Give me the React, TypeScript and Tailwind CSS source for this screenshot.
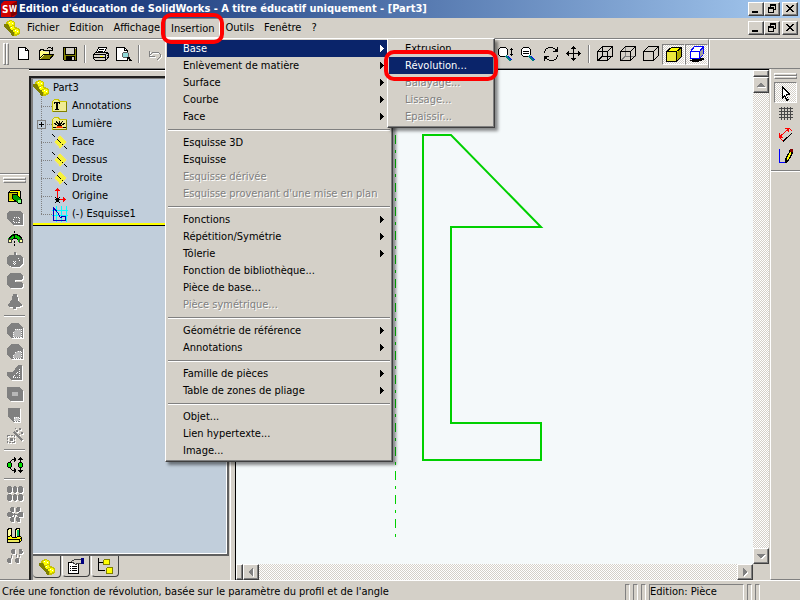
import type { ReactNode } from 'react'
import { clsx } from 'clsx'

function Icon({ children, off }: { children: ReactNode; off?: boolean }) {
  return (
    <svg
      width="16"
      height="16"
      viewBox="0 0 16 16"
      fill="none"
      shapeRendering="crispEdges"
      aria-hidden="true"
      className={clsx('block shrink-0', off && 'drop-shadow-[1px_1px_0_#fff]')}
    >
      {children}
    </svg>
  )
}

/* ---------- icons ---------- */

const PartIcon = () => (
  <Icon>
    <path d="M3 1h2V0h3v1h2v1h1v5h2v1h2v1h1v5h-1v1h-2v1H9v-1L0 7V4h2V2h1z" fill="#c8c400" />
    <path d="M0 4h4l1 2 2 3 3 3v4H8L7 14 0 7z" fill="#808000" />
    <path d="M4 2h2V1h2v1h2v3H8v1H5V4H4zM6 7h2V6h2v2h1v1H9v1H7V9H6zM9 10h2V9h3v1h1v3h-2v1h-2v-2H9z" fill="#ffff00" />
    <path d="M5 2h1v1H5zM8 3h1v1H8zM7 7h1v1H7zM11 10h1v1h-1zM13 11h1v1h-1z" fill="#fff" />
  </Icon>
)

const NewIcon = () => (
  <Icon>
    <path d="M2.5 1.5h7l3 3v9h-10z" fill="#fff" stroke="#000" />
    <path d="M9.5 1.5v3h3" stroke="#000" />
  </Icon>
)

const OpenIcon = () => (
  <Icon>
    <path d="M1 5h4l1 1h5v3H5l-4 4z" fill="#ffff80" />
    <path d="M1 13l4-4h10l-4 4z" fill="#808000" />
    <path d="M.5 13.500v-9h1v-1h3v1h6v4M.5 13.500h10l4-5h-10l-4 4" stroke="#000" />
    <path d="M8 2.500h1M9 1.500h3M12 2.500h1M13.500 1v4M11 4.500h3" stroke="#000" />
  </Icon>
)

const SaveIcon = () => (
  <Icon>
    <path d="M1.500 1.500h13v13h-12l-1-1z" fill="#808000" stroke="#000" />
    <path d="M4 2h8v6H4z" fill="#d4d0c8" />
    <path d="M3.500 2v6.500h9V2" stroke="#000" />
    <path d="M4 10h9v4H4z" fill="#000" />
    <path d="M10 11h2v3h-2zM13 2h1v1h-1z" fill="#d4d0c8" />
  </Icon>
)

const PrintIcon = () => (
  <Icon>
    <path d="M3.500 6.500l2-5h8l-2 5" fill="#fff" stroke="#000" />
    <path d="M6 3.500h5M5 5.500h5" stroke="#000" />
    <path d="M.5 8.500l2-2h12l1 1v4l-3 3h-10l-2-2z" fill="#d4d0c8" stroke="#000" />
    <path d="M1 8.500h11.500v5M12.500 8.500l3-2M1 11.500h11" stroke="#000" />
    <path d="M7 10h3v1H7z" fill="#ffff00" />
    <path d="M14 9h1v1h-1zM14 11h1v1h-1z" fill="#000" />
  </Icon>
)

const PreviewIcon = () => (
  <Icon>
    <path d="M.5 1.500h8l3 3v10H.5z" fill="#fff" stroke="#000" />
    <path d="M8.500 1.500v3h3" stroke="#000" />
    <circle cx="9.500" cy="9" r="3" fill="#90d8d8" stroke="#606060" />
    <path d="M12 11l3 4" stroke="#000" strokeWidth="2" />
  </Icon>
)

const UndoIcon = () => (
  <Icon off>
    <path d="M2.500 5v5h5M3 9l3-3h5l2 2v3l-2 2h-1" stroke="#808080" />
  </Icon>
)

const ZoomSheetIcon = () => (
  <Icon>
    <circle cx="6" cy="6" r="5" fill="#fff" stroke="#000" />
    <path d="M9 10l5 5" stroke="#008080" strokeWidth="2" />
    <path d="M11 10l4 4" stroke="#0000ff" />
    <path d="M14.500 2v8M13 3.500h3M13 8.500h3" stroke="#000" />
  </Icon>
)

const ZoomOutIcon = () => (
  <Icon>
    <circle cx="6" cy="6" r="5" fill="#fff" stroke="#000" />
    <path d="M3 5.500h6M3 7.500h6" stroke="#000" />
    <path d="M9 10l5 5" stroke="#008080" strokeWidth="2" />
    <path d="M11 10l4 4" stroke="#0000ff" />
  </Icon>
)

const RotateIcon = () => (
  <Icon>
    <path
      d="M1 5h1v2H1zM2 3h1v2H2zM3 2h2v1H3zM5 1h5v1H5zM10 2h2v1h-2zM12 3h1v1h-1zM14 1h1v5h-5V5h2V4h1V3h1z"
      fill="#000"
    />
    <path
      d="M14 9h1v2h-1zM13 11h1v2h-1zM11 13h2v1h-2zM6 14h5v1H6zM4 13h2v1H4zM3 12h1v1H3zM1 15V10h5v1H4v1H3v1H2v2z"
      fill="#000"
    />
  </Icon>
)

const PanIcon = () => (
  <Icon>
    <path d="M7.500 1v13M1 7.500h13" stroke="#000" />
    <path
      d="M7 0h1v1h1v1h1v1H5V2h1V1h1zM7 15h1v-1h1v-1h1v-1H5v1h1v1h1zM0 7v1h1v1h1v1h1V5H2v1H1v1zM15 7v1h-1v1h-1v1h-1V5h1v1h1v1z"
      fill="#000"
    />
  </Icon>
)

const CubeIcon = ({ hidden }: { hidden?: string }) => (
  <Icon>
    {hidden && <path d="M5.500 1v9h10M1 14.500l4.500-4.500" stroke={hidden} />}
    <path d="M.5 5.500h10v9H.5zM.5 5.500l5-5h10l-5 5M15.500.5v9l-5 5" stroke="#000" />
  </Icon>
)

const ShadedIcon = () => (
  <Icon>
    <path d="M.5 5.500l5-4h10v9l-5 5H.5z" fill="#ffff00" stroke="#000" />
    <path d="M11 6l4-4v8l-4 4z" fill="#b0ac00" />
    <path d="M1 6h9v9H1z" fill="#ece83c" />
    <path d="M.5 5.500h10v9M10.500 5.500l5-4" stroke="#000" />
  </Icon>
)

const ShadowIcon = () => (
  <Icon>
    <path d="M3 12h12v2h-2v1h-3v1H3v-1H1v-1h2z" fill="#000" />
    <path d="M1.500 5.500l4-5h9v7l-4 5h-9z" fill="#fff" stroke="#0000ff" />
    <path d="M11 6l3-4v6l-3 3z" fill="#a0a0a0" />
    <path d="M1.500 5.500h9v7M10.500 5.500l4-5" stroke="#0000ff" />
  </Icon>
)

const SelectIcon = () => (
  <Icon>
    <path
      d="M4 1h1v1h1v1h1v1h1v1h1v1h1v1h1v1h1v2H9v2h1v2h1v1h-1v1H8v-2H7v-2H6v1H5v1H4z"
      fill="#000"
    />
    <path d="M5 4h1v1h1v1h1v1h1v1h1v1H8v2h1v2h1v1H9v-1H8v-2H7v-1H6v1H5z" fill="#fff" />
  </Icon>
)

const GridIcon = () => (
  <Icon>
    <path
      d="M1 2.500h14M1 5.500h14M1 8.500h14M1 11.500h14M3.500 1v13M6.500 1v13M9.500 1v13M12.500 1v13"
      stroke="#484848"
    />
  </Icon>
)

const DimensionIcon = () => (
  <Icon>
    <path d="M2 9.500L10.500 2" stroke="#ff0000" />
    <path d="M1 6h1v2h2v2h1v1H1zM7 2V1h4v4h-1V3H9V2z" fill="#ff0000" />
    <path d="M1 10l4 4M11 1l3 3" stroke="#ff0000" />
    <path d="M5 14.500l9.500-9" stroke="#000" />
  </Icon>
)

const SketchIcon = () => (
  <Icon>
    <path d="M1.500 1v13.500h5" stroke="#0000ff" strokeWidth="1" />
    <path d="M7 15v-4l1-2 3-5 1-3h3v4l-2 4-3 5-2 1z" fill="#000" />
    <path d="M9 10l3-6h1v2l-3 6H9z" fill="#ffff00" />
    <path d="M12 1h3v3h-3z" fill="#800000" />
  </Icon>
)

const BossIcon = () => (
  <Icon>
    <path d="M1.500 3.500l2-2h9l1 1v8l-2 2h-10z" fill="#ffff00" stroke="#000" />
    <path d="M2 4h8v7H2z" fill="#c8c400" />
    <path d="M1.500 3.500h9v8" stroke="#000" />
    <path d="M5.500 5.500h4l5 5v4h-3l-6-5z" fill="#00a000" stroke="#000" />
    <path d="M11 11h3v3h-3z" fill="#80ff80" />
  </Icon>
)

const CutIcon = () => (
  <Icon off>
    <path d="M0 3l2-2h11l3 3v11H6l-6-6z" fill="#808080" />
    <path d="M6.500 7.500h6v5h-6z" stroke="#fff" strokeDasharray="1 1" />
  </Icon>
)

const RevolveIcon = () => (
  <Icon>
    <path d="M1 8l2-3 3-2h4l3 2 2 3v3h-4V9L9 8H7L5 9 4 11H1z" fill="#00c800" />
    <path d="M1 8h1V6h1V5h1V4h2V3h4v1h2v1h1v1h1v2M5 9l2-2h2l2 2" stroke="#000" />
    <path d="M1 8h3v3H1zM12 8h3v3h-3z" fill="#ffffa0" stroke="#404040" />
    <path d="M7.500 0v2M7.500 4v4M7.500 10v2M7.500 13v2" stroke="#000" />
  </Icon>
)

const RevolveCutIcon = () => (
  <Icon off>
    <path d="M0 5l3-2h4V0h2v3h4l3 3v5l-3 4H5l-5-3z" fill="#808080" />
    <path d="M6 9h1v1H6zM8 9h1v1H8zM7 10h1v1H7zM6 11h1v1H6zM8 11h1v1H8zM7 12h1v1H7zM11 6h1v1h-1zM12 8h1v1h-1z" fill="#fff" />
  </Icon>
)

const SweepIcon = () => (
  <Icon off>
    <path d="M3 0h10l3 2v3l-2 2H8v2h6l2 1v3l-2 2H3l-3-3V3z" fill="#808080" />
  </Icon>
)

const LoftIcon = () => (
  <Icon off>
    <path d="M6 0h4l1 5 1 3 4 3-4 2H9v2H6v-2H3l-3-2 3-3 2-3z" fill="#808080" />
  </Icon>
)

const FilletIcon = ({ cut }: { cut?: boolean }) => (
  <Icon off>
    <path d="M5 0h6l5 5v10H5l-5-4V4z" fill="#808080" />
    <path d={cut ? 'M6 14v-3l4-4h4v7z' : 'M6 14v-5l3-3h5v8z'} fill="#b8b8b8" stroke="#fff" strokeDasharray="1 1" />
  </Icon>
)

const RibIcon = () => (
  <Icon off>
    <path d="M11 0h4v15H4l-4-4V7h6z" fill="#808080" />
    <path d="M6 12.500h6.500V4M6 12l6-6" stroke="#fff" strokeDasharray="1 1" />
  </Icon>
)

const ShellIcon = () => (
  <Icon off>
    <path d="M0 1h12l4 3v11H3l-3-3z" fill="#808080" />
    <path d="M5 6h6v4H5z" fill="#b8b8b8" />
  </Icon>
)

const DraftIcon = () => (
  <Icon off>
    <path d="M1 1h12v14H6l-5-5z" fill="#808080" />
    <path d="M7 10h5v4H7z" fill="#c8c8c8" stroke="#fff" strokeDasharray="1 1" />
  </Icon>
)

const WizardIcon = () => (
  <Icon off>
    <path d="M.5 7.500h7v7h-7z" stroke="#808080" strokeDasharray="2 1" />
    <path d="M3 10h3v3H3zM6 4l2-1 8 9-2 1z" fill="#808080" />
    <path d="M9 2h2v2H9zM12 0h2v2h-2zM14 4h2v2h-2zM12 6h1v1h-1zM8 0h1v1H8z" fill="#808080" />
  </Icon>
)

const MateIcon = () => (
  <Icon>
    <path
      d="M3 4h1v2H3zM4 3h1v1H4zM5 2h2V0h1v1h1v3H8v1H7V3H5zM3 10h1v2H3zM4 12h1v1H4zM5 13h2v-2h1v1h1v3H8v1H7v-2H5zM13 0h1v1h1v1h1v1h-2v3h-1V3h-2V2h1V1h1zM13 16h1v-1h1v-1h1v-1h-2v-3h-1v3h-2v1h1v1h1z"
      fill="#000"
    />
    <path d="M1 5h3v1h1v4H4v1H1v-1H0V6h1zM12 5h3v1h1v4h-1v1h-3v-1h-1V6h1z" fill="#000" />
    <path d="M1 6h3v4H1zM12 6h3v4h-3z" fill="#00e000" />
  </Icon>
)

const PatternIcon = () => (
  <Icon off>
    <path
      d="M1 0h3v1h1v5H4v1H1V6H0V1h1zM7 0h2v1h1v5H9v1H7V6H6V1h1zM12 0h3v1h1v5h-1v1h-3V6h-1V1h1zM1 8h3v1h1v5H4v1H1v-1H0V9h1zM7 8h2v1h1v5H9v1H7v-1H6V9h1zM12 8h3v1h1v5h-1v1h-3v-1h-1V9h1z"
      fill="#808080"
    />
  </Icon>
)

const CircularIcon = () => (
  <Icon off>
    <path
      d="M4 0h2l1 1v4H5L3 4V1zM10 0h2l1 1v3l-2 1H9V1zM1 5h3l2 2v2l-2 1H1L0 9V6zM12 5h3l1 1v3l-1 1h-3l-2-1V7zM5 10h2v4l-1 1H4l-1-1v-3zM9 10h2l2 1v3l-1 1h-2l-1-1z"
      fill="#808080"
    />
    <path d="M7.500 6v4M6 7.500h4" stroke="#808080" />
  </Icon>
)

const MirrorIcon = () => (
  <Icon>
    <path d="M.5 9.500v-8h1v-1h3v8M8.500 8.500v-7h1v-1h3v9" fill="#ffffa0" stroke="#000" />
    <path d="M10 2h2v7h-2z" fill="#00c060" />
    <path d="M.5 9.500l3-2 2 2h4l1-1h3l1 1v3l-2 2H.5z" fill="#ffff00" stroke="#000" />
    <path d="M1 11.500h11.500v3M12.500 11.500l2-2" stroke="#000" />
    <path d="M1 12h11v2H1z" fill="#ece85c" />
  </Icon>
)

const LinksIcon = () => (
  <Icon off>
    <path d="M5 0h3v5H5l-1-2zM12 0h3l1 3-1 2h-3zM9 5h1v3H9zM1 9h3v5H1l-1-2zM9 9h3v5H9l-1-2zM4 6h1v3H4zM12 6h1v2h-1z" fill="#808080" />
  </Icon>
)

const FolderIcon = ({ children }: { children?: ReactNode }) => (
  <Icon>
    <path d="M.5 3.500l2-2h4l1 2h7v10H.5z" fill="#f0ec94" stroke="#c8c400" />
    <path d="M14.500 4v9.500H1" stroke="#808000" />
    {children}
  </Icon>
)

const AnnotationIcon = () => (
  <FolderIcon>
    <path d="M2 4h6v2H7V5H6v6h1v1H3v-1h1V5H3v1H2z" fill="#000" />
  </FolderIcon>
)

const LightIcon = () => (
  <FolderIcon>
    <path d="M4 12v-1h1v-1h5v1h1v1z" fill="#ff4000" />
    <path d="M7.500 5v4M4 5l3 4M11 5L8 9M2 7l3 2M13 7l-3 2M1 11.500h3M11 11.500h3M5 9.500h5" stroke="#000" />
  </FolderIcon>
)

const PlaneIcon = () => (
  <Icon>
    <path d="M8 1l7 7-7 7-6-7z" fill="#f6f23c" stroke="#d4d0c8" />
    <path d="M0 0l3 3M5 5l4 4M10 10l1 1M12 12l3 3" stroke="#000" />
  </Icon>
)

const OriginIcon = () => (
  <Icon>
    <path d="M5.500 2v8M7 11.500h6" stroke="#ff0000" />
    <path d="M5 0h1v1h1v1h1v1H3V2h1V1h1zM14 11v1h-1v1h-1v1h-1V9h1v1h1v1z" fill="#ff0000" />
    <path d="M4 10h3v4H4zM3 9h1v1H3zM7 9h1v1H7zM3 14h1v1H3zM7 14h1v1H7zM3 11h5v1H3z" fill="#000" />
  </Icon>
)

const SketchNodeIcon = () => (
  <Icon>
    <path d="M0 4.500h16M0 9.500h16M4.500 0v16M9.500 0v16M14.500 0v16" stroke="#00ffff" />
    <path d="M1.500 1.500v13h12v-4h-3l-2 1-3-5z" stroke="#0000c0" />
  </Icon>
)

const PropertiesIcon = () => (
  <Icon>
    <path d="M.5 4.500h10v11H.5z" fill="#fff" stroke="#000" />
    <path d="M2 8.500h1M4 8.500h5M2 10.500h1M4 10.500h5M2 12.500h1M4 12.500h5" stroke="#000" />
    <path d="M3.500 3.500l3-2h7v4h-4l-2 1z" fill="#d4d0c8" stroke="#404040" />
    <path d="M13 0h3v6h-3z" fill="#000080" />
  </Icon>
)

const ConfigIcon = () => (
  <Icon>
    <path d="M1.500 0v12.500h6M2 4.500h4" stroke="#000" />
    <path d="M6.500 2.500l1-1h5v5h-6zM9.500 10.500l1-1h5v6h-6z" fill="#ffff00" stroke="#808000" />
  </Icon>
)

/* ---------- window parts ---------- */

const raised =
  'bg-[#d4d0c8] border border-t-white border-l-white border-r-[#404040] border-b-[#404040] shadow-[inset_-1px_-1px_0_#808080]'
const dither =
  'bg-[repeating-conic-gradient(#ffffff_0_25%,#d4d0c8_0_50%)] bg-[length:2px_2px]'

function WindowButtons() {
  const btn = clsx('flex h-[14px] w-4 items-center justify-center', raised)
  return (
    <div className="ml-auto flex pr-0.5">
      <button className={btn} aria-label="Réduire">
        <svg width="10" height="10" shapeRendering="crispEdges">
          <path d="M1 7h6v2H1z" />
        </svg>
      </button>
      <button className={btn} aria-label="Restaurer">
        <svg width="10" height="10" shapeRendering="crispEdges">
          <path d="M3 0h6v6H7V5h1V2H4v1H3zM1 3h6v6H1zM2 5v3h4V5z" fillRule="evenodd" />
        </svg>
      </button>
      <button className={clsx(btn, 'ml-0.5')} aria-label="Fermer">
        <svg width="10" height="10" shapeRendering="crispEdges" fill="none" stroke="#000">
          <path d="M1 1l7 7M2 1l7 7M8 1L1 8M9 1L2 8" />
        </svg>
      </button>
    </div>
  )
}

function ToolButton({ label, pressed, children }: { label: string; pressed?: boolean; children: ReactNode }) {
  return (
    <button
      aria-label={label}
      aria-pressed={pressed}
      className={clsx(
        'flex h-[21px] w-[23px] shrink-0 items-center justify-center',
        pressed && 'border border-t-[#808080] border-l-[#808080] border-r-white border-b-white',
        pressed && dither,
      )}
    >
      {children}
    </button>
  )
}

const VLine = () => (
  <div className="flex w-2 shrink-0 justify-center">
    <div className="h-[18px] w-0.5 border-l border-l-[#808080] border-r border-r-white" />
  </div>
)

const HLine = () => (
  <div className="flex h-2 w-full items-center px-1">
    <div className="h-0.5 w-full border-t border-t-[#808080] border-b border-b-white" />
  </div>
)

const Grip = () => (
  <div className="flex w-[23px] flex-col">
    <div className="h-[3px] border border-t-white border-l-white border-r-[#808080] border-b-[#808080]" />
    <div className="h-[3px] border border-t-white border-l-white border-r-[#808080] border-b-[#808080]" />
  </div>
)

type Entry = { label: string; sub?: boolean; off?: boolean }

const groups: Entry[][] = [
  [
    { label: 'Base', sub: true },
    { label: 'Enlèvement de matière', sub: true },
    { label: 'Surface', sub: true },
    { label: 'Courbe', sub: true },
    { label: 'Face', sub: true },
  ],
  [
    { label: 'Esquisse 3D' },
    { label: 'Esquisse' },
    { label: 'Esquisse dérivée', off: true },
    { label: 'Esquisse provenant d\'une mise en plan', off: true },
  ],
  [
    { label: 'Fonctions', sub: true },
    { label: 'Répétition/Symétrie', sub: true },
    { label: 'Tôlerie', sub: true },
    { label: 'Fonction de bibliothèque...' },
    { label: 'Pièce de base...' },
    { label: 'Pièce symétrique...', off: true },
  ],
  [
    { label: 'Géométrie de référence', sub: true },
    { label: 'Annotations', sub: true },
  ],
  [
    { label: 'Famille de pièces', sub: true },
    { label: 'Table de zones de pliage', sub: true },
  ],
  [{ label: 'Objet...' }, { label: 'Lien hypertexte...' }, { label: 'Image...' }],
]

const baseMenu: Entry[] = [
  { label: 'Extrusion...' },
  { label: 'Révolution...' },
  { label: 'Balayage...', off: true },
  { label: 'Lissage...', off: true },
  { label: 'Epaissir...', off: true },
]

const menuBox =
  'border border-t-white border-l-white border-r-[#404040] border-b-[#404040] bg-[#d4d0c8] p-px pb-0.5 shadow-[inset_-1px_-1px_0_#808080,3px_3px_3px_rgba(0,0,0,0.45)]'

function MenuItem({ entry, active }: { entry: Entry; active?: boolean }) {
  return (
    <button
      role="menuitem"
      disabled={entry.off}
      className={clsx(
        'flex h-[17px] w-full items-center justify-between pr-[7px] pl-4 text-left whitespace-nowrap',
        active && 'bg-[#0a246a] text-white',
        entry.off && 'text-[#808080] [text-shadow:1px_1px_0_#fff]',
      )}
    >
      {entry.label}
      {entry.sub && (
        <svg width="4" height="7" shapeRendering="crispEdges" fill="currentColor" aria-hidden="true">
          <path d="M0 0h1v1h1v1h1v1h1v1H3v1H2v1H1v1H0z" />
        </svg>
      )}
    </button>
  )
}

function InsertionMenu() {
  return (
    <div role="menu" className={clsx('absolute top-full left-0 z-10 w-[228px]', menuBox)}>
      {groups.map((group, i) => (
        <div key={i}>
          {i > 0 && (
            <div className="flex h-[9px] items-center px-px">
              <div className="h-0.5 w-full border-t border-t-[#808080] border-b border-b-white" />
            </div>
          )}
          {group.map((entry) => (
            <MenuItem key={entry.label} entry={entry} active={entry.label === 'Base'} />
          ))}
        </div>
      ))}
      <div role="menu" className={clsx('absolute -top-px left-[221px] w-[108px]', menuBox)}>
        {baseMenu.map((entry) => (
          <div key={entry.label} className="relative">
            <MenuItem entry={entry} active={entry.label === 'Révolution...'} />
            {entry.label === 'Révolution...' && (
              <div className="pointer-events-none absolute -inset-x-[5px] -inset-y-[7px] z-10 rounded-[10px] border-4 border-[#ff0000]" />
            )}
          </div>
        ))}
      </div>
    </div>
  )
}

const treeNodes = [
  { label: 'Annotations', icon: <AnnotationIcon /> },
  { label: 'Lumière', icon: <LightIcon />, expandable: true },
  { label: 'Face', icon: <PlaneIcon /> },
  { label: 'Dessus', icon: <PlaneIcon /> },
  { label: 'Droite', icon: <PlaneIcon /> },
  { label: 'Origine', icon: <OriginIcon /> },
  { label: '(-) Esquisse1', icon: <SketchNodeIcon /> },
]

function FeatureTree() {
  return (
    <ul className="border-b border-b-black">
      <li className="flex h-[18px] items-center gap-1">
        <PartIcon />
        Part3
      </li>
      {treeNodes.map((node, i) => (
        <li key={node.label} className="flex h-[18px] items-center">
          <svg width="19" height="18" fill="none" stroke="#808080" shapeRendering="crispEdges" className="shrink-0">
            <path d={i === treeNodes.length - 1 ? 'M8.500 0v9' : 'M8.500 0v18'} strokeDasharray="1 1" />
            <path d="M8 9.500h11" strokeDasharray="1 1" />
            {node.expandable && (
              <>
                <path d="M4.500 5.500h8v8h-8z" fill="#c1cedb" />
                <path d="M6 9.500h5M8.500 7v5" stroke="#000" />
              </>
            )}
          </svg>
          {node.icon}
          <span className="pl-1">{node.label}</span>
        </li>
      ))}
      <li className="h-0.5 bg-[#ffff00]" />
    </ul>
  )
}

function ScrollArrow({ label, d }: { label: string; d: string }) {
  return (
    <button aria-label={label} className={clsx('flex size-4 shrink-0 items-center justify-center', raised)}>
      <svg width="8" height="8" shapeRendering="crispEdges" className="drop-shadow-[1px_1px_0_#fff]">
        <path d={d} fill="#808080" />
      </svg>
    </button>
  )
}

function Sheet() {
  return (
    <div className="flex min-w-0 flex-1 flex-col border-t border-l border-black">
      <div className="flex min-h-0 flex-1">
        <div className="min-w-0 flex-1 overflow-hidden bg-[#f4f9fa]">
          <svg width="310" height="480" fill="none" stroke="#00d000">
            <path d="M159.500 65v402" strokeDasharray="9 6 3 6" shapeRendering="crispEdges" />
            <path d="M187 65h28l90 92h-90v196h90v37H187z" strokeWidth="2" />
          </svg>
        </div>
        <div className={clsx('flex w-4 flex-col', dither)}>
          <div className={clsx('h-[7px]', raised)} />
          <ScrollArrow label="Haut" d="M4 2h1v1h1v1h1v1h1v1H0V5h1V4h1V3h1V2z" />
          <div className="flex-1" />
          <ScrollArrow label="Bas" d="M0 2h8v1H7v1H6v1H5v1H3V5H2V4H1V3H0z" />
        </div>
      </div>
      <div className="flex h-4">
        <div className={clsx('flex min-w-0 flex-1', dither)}>
          <div className={clsx('w-[7px]', raised)} />
          <ScrollArrow label="Gauche" d="M6 0v8H5V7H4V6H3V5H2V3h1V2h1V1h1V0z" />
          <div className="flex-1" />
          <ScrollArrow label="Droite" d="M2 0h1v1h1v1h1v1h1v2H5v1H4v1H3v1H2z" />
        </div>
        <div className="w-4" />
      </div>
    </div>
  )
}

const menuButton = 'h-5 px-[5px]'

export default function App() {
  return (
    <div className="flex min-h-screen flex-col bg-[#d4d0c8] font-['DejaVu_Sans_Condensed','DejaVu_Sans',sans-serif] text-[11px] leading-[14px] text-black">
      <header className="flex h-[18px] items-center bg-linear-to-r from-[#0a246a] to-[#a6caf0] font-bold whitespace-nowrap text-white">
        <svg width="16" height="16" className="mr-0.5 ml-px shrink-0" aria-hidden="true">
          <path d="M0 3l3-3h13v13l-3 3H0z" fill="#d00000" />
          <path d="M9 4l7-4v13l-6 3z" fill="#800000" />
          <text x="1" y="12" fontSize="10" fill="#fff">S</text>
          <text x="8" y="11" fontSize="8" fill="#fff">W</text>
        </svg>
        <h1>Edition d'éducation de SolidWorks - A titre éducatif uniquement - [Part3]</h1>
        <WindowButtons />
      </header>

      <nav className="flex h-5 items-center pl-1">
        <div className="mr-0.5">
          <PartIcon />
        </div>
        <button className={menuButton}>Fichier</button>
        <button className={menuButton}>Edition</button>
        <button className={menuButton}>Affichage</button>
        <div className="relative">
          <button
            aria-expanded="true"
            className="h-5 border border-t-[#808080] border-l-[#808080] border-r-white border-b-white px-[5px] pt-0.5"
          >
            Insertion
          </button>
          <InsertionMenu />
          <div className="pointer-events-none absolute -inset-x-1 -top-[5px] -bottom-1.5 z-20 rounded-[10px] border-4 border-[#ff0000]" />
        </div>
        <button className={menuButton}>Outils</button>
        <button className={menuButton}>Fenêtre</button>
        <button className={menuButton}>?</button>
        <WindowButtons />
      </nav>

      <div className="flex h-[31px] border-t border-b border-[#808080]">
        <div className="flex items-center border-t border-r border-t-white border-r-[#808080]">
          <div className="mr-[3px] ml-[3px] flex">
            <div className="h-[22px] w-[3px] border border-t-white border-l-white border-r-[#808080] border-b-[#808080]" />
            <div className="h-[22px] w-[3px] border border-t-white border-l-white border-r-[#808080] border-b-[#808080]" />
          </div>
          <ToolButton label="Nouveau"><NewIcon /></ToolButton>
          <ToolButton label="Ouvrir"><OpenIcon /></ToolButton>
          <ToolButton label="Enregistrer"><SaveIcon /></ToolButton>
          <VLine />
          <ToolButton label="Imprimer"><PrintIcon /></ToolButton>
          <ToolButton label="Aperçu"><PreviewIcon /></ToolButton>
          <VLine />
          <ToolButton label="Annuler"><UndoIcon /></ToolButton>
          <div className="w-[327px]" />
          <ToolButton label="Zoom avant/arrière"><ZoomSheetIcon /></ToolButton>
          <ToolButton label="Zoom sélection"><ZoomOutIcon /></ToolButton>
          <ToolButton label="Rotation"><RotateIcon /></ToolButton>
          <ToolButton label="Translation"><PanIcon /></ToolButton>
          <VLine />
          <ToolButton label="Image filaire"><CubeIcon hidden="#000" /></ToolButton>
          <ToolButton label="Lignes cachées en gris"><CubeIcon hidden="#808080" /></ToolButton>
          <ToolButton label="Lignes cachées supprimées"><CubeIcon /></ToolButton>
          <ToolButton label="Image ombrée" pressed><ShadedIcon /></ToolButton>
          <ToolButton label="Ombres" pressed><ShadowIcon /></ToolButton>
        </div>
        <div className="flex-1 border-t border-l border-white" />
      </div>

      <main className="flex flex-1">
        <aside className="flex w-[29px] shrink-0 flex-col border-b border-b-[#808080]">
          <div className="h-[105px] border-b border-b-[#808080]" />
          <div className="flex flex-1 flex-col items-center border-t border-t-white pt-[2px]">
            <Grip />
            <div className="flex w-full flex-col items-center pt-[3px] pb-2">
              <ToolButton label="Base/Bossage extrudé"><BossIcon /></ToolButton>
              <ToolButton label="Enlèvement extrudé"><CutIcon /></ToolButton>
              <ToolButton label="Base/Bossage avec révolution"><RevolveIcon /></ToolButton>
              <ToolButton label="Enlèvement avec révolution"><RevolveCutIcon /></ToolButton>
              <ToolButton label="Balayage"><SweepIcon /></ToolButton>
              <ToolButton label="Lissage"><LoftIcon /></ToolButton>
              <HLine />
              <ToolButton label="Congé"><FilletIcon /></ToolButton>
              <ToolButton label="Chanfrein"><FilletIcon cut /></ToolButton>
              <ToolButton label="Nervure"><RibIcon /></ToolButton>
              <ToolButton label="Coque"><ShellIcon /></ToolButton>
              <ToolButton label="Dépouille"><DraftIcon /></ToolButton>
              <ToolButton label="Assistance au perçage"><WizardIcon /></ToolButton>
              <HLine />
              <ToolButton label="Contrainte"><MateIcon /></ToolButton>
              <HLine />
              <ToolButton label="Répétition linéaire"><PatternIcon /></ToolButton>
              <ToolButton label="Répétition circulaire"><CircularIcon /></ToolButton>
              <ToolButton label="Symétrie"><MirrorIcon /></ToolButton>
              <ToolButton label="Joindre"><LinksIcon /></ToolButton>
            </div>
          </div>
        </aside>

        <section className="flex w-[202px] shrink-0 flex-col border-t border-r border-t-black border-r-white">
          <div className="h-[6px] border-t border-white" />
          <div className="flex flex-1 flex-col border-t-2 border-l-2 border-[#202020]">
            <div className="flex flex-1 flex-col border-t border-l-2 border-[#808080]">
              <div className="mr-px flex-1 border-r-2 border-b-2 border-[#606060] bg-[#c1cedb]">
                <div className="h-full border-r border-b border-white">
                  <FeatureTree />
                </div>
              </div>
              <div className="flex h-[22px] items-start gap-px">
                <button aria-label="Arbre de création" className="flex h-[22px] w-7 items-center justify-center rounded-b-sm border-r border-b border-[#404040]">
                  <PartIcon />
                </button>
                <button aria-label="Propriétés" className="flex h-[21px] w-7 items-center justify-center rounded-b-sm border-r border-b border-l border-[#404040] border-l-white">
                  <PropertiesIcon />
                </button>
                <button aria-label="Configurations" className="flex h-[21px] w-7 items-center justify-center rounded-b-sm border-r border-b border-l border-[#404040] border-l-white">
                  <ConfigIcon />
                </button>
              </div>
              <div className="h-[2px]" />
            </div>
          </div>
        </section>
        <div className="w-1 shrink-0" />

        <Sheet />

        <aside className="ml-px flex w-[30px] shrink-0 flex-col border-b border-l border-b-[#808080] border-l-white">
          <div className="flex flex-col items-center border-b border-b-[#808080] pt-1 pb-1">
            <Grip />
            <div className="pt-[3px]">
              <ToolButton label="Sélectionner" pressed><SelectIcon /></ToolButton>
              <ToolButton label="Grille"><GridIcon /></ToolButton>
              <ToolButton label="Cotation"><DimensionIcon /></ToolButton>
              <ToolButton label="Esquisse"><SketchIcon /></ToolButton>
            </div>
          </div>
          <div className="border-t border-t-white" />
        </aside>
      </main>

      <footer className="flex h-5 items-stretch gap-[3px] border-t border-t-white pt-[3px] whitespace-nowrap">
        <p className="flex-1 pt-px pl-0.5">
          Crée une fonction de révolution, basée sur le paramètre du profil et de l'angle
        </p>
        <div className="w-[5px] border-t border-r border-l border-[#808080] border-r-white" />
        <div className="w-[5px] border-t border-r border-l border-[#808080] border-r-white" />
        <div className="w-[5px] border-t border-r border-l border-[#808080] border-r-white" />
        <div className="w-[95px] border-t border-r border-l border-[#808080] border-r-white">Edition: Pièce</div>
        <div className="w-[5px] border-t border-r border-l border-[#808080] border-r-white" />
        <div className="mr-[40px] w-[5px] border-t border-r border-l border-[#808080] border-r-white" />
      </footer>
    </div>
  )
}
